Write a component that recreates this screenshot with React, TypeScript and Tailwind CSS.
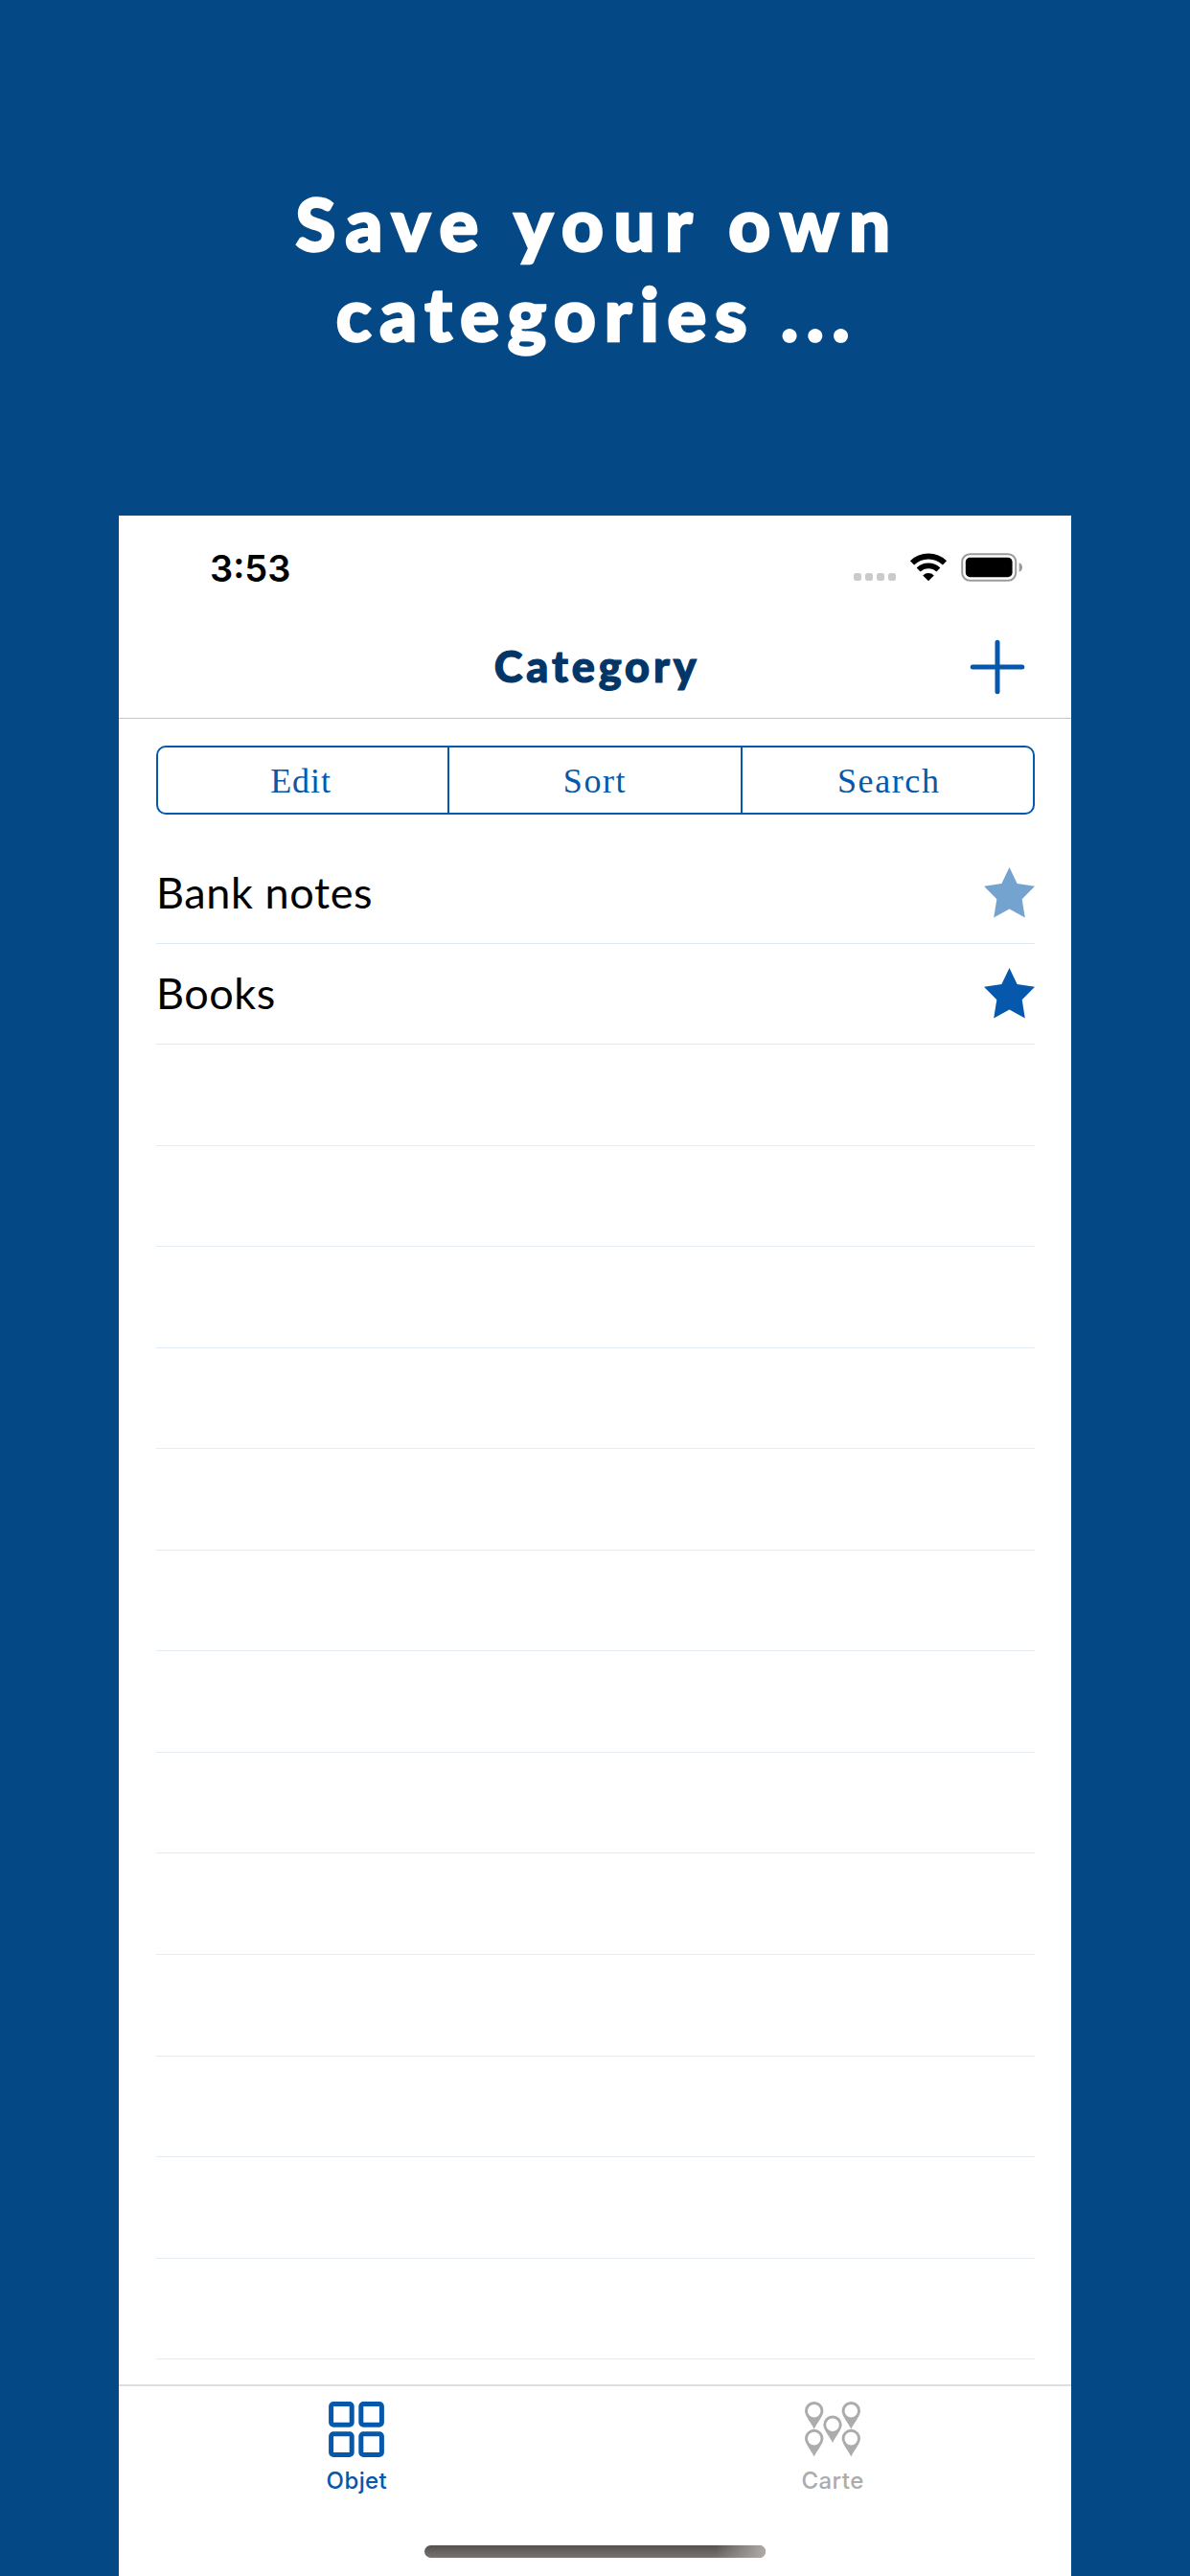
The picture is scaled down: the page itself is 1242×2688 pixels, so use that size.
const categories = [
  { name: 'Bank notes', star: 'text-[#75a3cf]', spacing: 'tracking-[0.6px]' },
  { name: 'Books', star: 'text-[#0558ab]', spacing: 'tracking-[0.5px]' },
];

const emptyRows = Array.from({ length: 13 }, (_, i) => i);

function Wifi() {
  return (
    <svg className="ml-[14px] h-[30px] w-[40px]" viewBox="0 0 40 30" fill="none" stroke="#000">
      <path d="M3 10.4 A24.5 24.5 0 0 1 37 10.4" strokeWidth="6" />
      <path d="M9.6 17.6 A14.8 14.8 0 0 1 30.4 17.6" strokeWidth="5.6" />
      <path d="M20 29.2 L14.2 23.4 A8.4 8.4 0 0 1 25.8 23.4 Z" fill="#000" stroke="none" />
    </svg>
  );
}

function Battery() {
  return (
    <svg className="ml-[14px] h-[30px] w-[64px]" viewBox="0 0 64 30">
      <rect x="1.2" y="1.2" width="56" height="27.6" rx="8" fill="none" stroke="#9b9b9b" strokeWidth="2" />
      <rect x="4.8" y="4.8" width="48.8" height="20.4" rx="4.6" fill="#000" />
      <path d="M60.6 10.2 Q64 11.4 64 15 Q64 18.6 60.6 19.8 Z" fill="#9b9b9b" />
    </svg>
  );
}

function StatusBar() {
  return (
    <div className="flex h-[108px] items-center pr-[50.5px] pl-[95px]">
      <span className="mt-px font-['Inter',sans-serif] text-[38px] leading-[46px] font-semibold text-black">3:53</span>
      <div className="ml-auto flex items-center">
        <div className="mt-[20px] flex gap-1">
          <i className="size-2 rounded-[2.5px] bg-[#cbcbcb]" />
          <i className="size-2 rounded-[2.5px] bg-[#cbcbcb]" />
          <i className="size-2 rounded-[2.5px] bg-[#cbcbcb]" />
          <i className="size-2 rounded-[2.5px] bg-[#cbcbcb]" />
        </div>
        <Wifi />
        <Battery />
      </div>
    </div>
  );
}

function NavBar() {
  return (
    <div className="grid h-[104px] grid-cols-[1fr_auto_1fr] items-center border-b border-[#c6c6c8] pr-[47.5px] pb-[7px] pl-[47.5px]">
      <span />
      <h2 className="pt-px pl-[5px] font-['Lato',sans-serif] text-[45px] leading-[54px] font-black tracking-[3.9px] text-[#033668] [-webkit-text-stroke:1.2px_#033668]">
        Category
      </h2>
      <svg className="mt-[3px] size-[58px] justify-self-end" viewBox="0 0 58 58" stroke="#0558ab" strokeWidth="5" strokeLinecap="round">
        <path d="M29 3.2V54.8M3.2 29H54.8" />
      </svg>
    </div>
  );
}

function Segments() {
  return (
    <div className="mr-[38px] ml-[39px] mt-[28px] grid h-[72px] grid-cols-[304px_306px_1fr] divide-x-2 divide-[#0558ab] rounded-[10px] border-2 border-[#0558ab] font-['Liberation_Serif',serif] text-[36px] leading-[40px] text-[#0558ab]">
      <button className="pt-px pr-[4px] tracking-[0.9px]">Edit</button>
      <button className="pt-px tracking-[1.6px]">Sort</button>
      <button className="pt-px pl-[3px] tracking-[1.6px]">Search</button>
    </div>
  );
}

function Star({ color }: { color: string }) {
  return (
    <svg className={`mt-px size-[53px] ${color}`} viewBox="0 0 53 53" fill="currentColor">
      <path d="M26.5 0 L34.6 17.1 L53 19.7 L39.7 33.2 L42.8 52.5 L26.5 43.6 L10.2 52.5 L13.3 33.2 L0 19.7 L18.4 17.1 Z" />
    </svg>
  );
}

function Grid() {
  return (
    <svg className="h-[58px] w-[58px]" viewBox="0 0 58 58" fill="none" stroke="#0558ab" strokeWidth="5">
      <rect x="2.6" y="2.6" width="21.6" height="21.6" rx="2.5" />
      <rect x="33.8" y="2.6" width="21.6" height="21.6" rx="2.5" />
      <rect x="2.6" y="33.8" width="21.6" height="21.6" rx="2.5" />
      <rect x="33.8" y="33.8" width="21.6" height="21.6" rx="2.5" />
    </svg>
  );
}

const pins = [
  [0, 0],
  [38.6, 0],
  [19.3, 14.4],
  [0, 28.8],
  [38.6, 28.8],
];

function Pins() {
  return (
    <svg className="h-[58px] w-[58px]" viewBox="0 0 58 58" fill="#acacac" fillRule="evenodd">
      {pins.map(([x, y]) => (
        <path
          key={`${x}-${y}`}
          transform={`translate(${x} ${y})`}
          d="M9.7 28.8 C8.2 24 0 15.6 0 9.7 A9.7 9.7 0 0 1 19.4 9.7 C19.4 15.6 11.2 24 9.7 28.8 Z M9.7 3 A6.8 6.8 0 1 0 9.7 16.6 A6.8 6.8 0 1 0 9.7 3 Z"
        />
      ))}
    </svg>
  );
}

function TabBar() {
  return (
    <div className="relative grid h-[200px] grid-cols-2 border-t-2 border-[#dedede] font-['Inter',sans-serif] text-[24px] leading-[30px] font-medium">
      <div className="flex flex-col items-center pt-[16px] text-[#0558ab]">
        <Grid />
        <span className="mt-[10px] tracking-[0.4px]">Objet</span>
      </div>
      <div className="flex flex-col items-center pt-[16px] text-[#acacac]">
        <Pins />
        <span className="mt-[10px] tracking-[0.5px]">Carte</span>
      </div>
      <div className="absolute top-[166px] left-[319px] h-[13px] w-[356px] overflow-hidden rounded-full bg-linear-to-b from-[#545250] to-[#787370]">
        <div className="ml-auto h-full w-[52px] bg-linear-to-r from-transparent to-[#b0aba9]" />
      </div>
    </div>
  );
}

export default function App() {
  return (
    <main className="flex h-[2688px] w-[1242px] flex-col overflow-hidden bg-[#054886]">
      <h1 className="flex h-[538px] flex-col items-center pt-[186px] font-['Lato',sans-serif] text-[76px] leading-[94px] font-black text-white [-webkit-text-stroke:2.5px_white]">
        <span className="pl-[6px] tracking-[10.5px] whitespace-pre">Save your own</span>
        <span className="pl-[4px] tracking-[8.7px] whitespace-pre">categories ...</span>
      </h1>
      <section className="ml-[124px] flex w-[993.5px] grow flex-col bg-white">
        <StatusBar />
        <NavBar />
        <Segments />
        <ul className="mt-[29px] mr-[38px] ml-[39px] grow">
          {categories.map((c) => (
            <li key={c.name} className="flex h-[105.55px] items-center justify-between border-b border-[#dfe9f3] pb-px">
              <span className={`font-['Lato',sans-serif] text-[45px] leading-[54px] text-black ${c.spacing}`}>{c.name}</span>
              <Star color={c.star} />
            </li>
          ))}
          {emptyRows.map((i) => (
            <li key={i} className="h-[105.55px] border-b border-[#e4edf5]" />
          ))}
        </ul>
        <TabBar />
      </section>
    </main>
  );
}
